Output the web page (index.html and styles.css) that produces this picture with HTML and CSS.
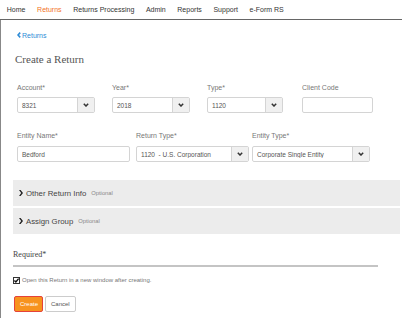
FILE: index.html
```html
<!DOCTYPE html>
<html lang="en">
<head>
    <meta charset="UTF-8">
    <meta name="viewport" content="width=device-width, initial-scale=1.0">
    <title>Create a Return</title>
    <link rel="stylesheet" href="styles.css">
</head>
<body>

<nav class="topnav">
    <a href="#">Home</a>
    <a href="#" class="active">Returns</a>
    <a href="#">Returns Processing</a>
    <a href="#">Admin</a>
    <a href="#">Reports</a>
    <a href="#">Support</a>
    <a href="#">e-Form RS</a>
</nav>

<main class="page">
    <a href="#" class="back-link">
        <svg width="4" height="6" viewBox="0 0 4 6"><polyline points="3.2,0.6 1,3 3.2,5.4" fill="none" stroke="#2d8bd6" stroke-width="1.6"/></svg>Returns
    </a>

    <h1 class="page-title">Create a Return</h1>

    <form class="return-form" onsubmit="return false">
        <!-- першій ряд -->
        <div class="field-row row-four">
            <div class="field">
                <label>Account*</label>
                <div class="select w78">
                    <span class="select-value">8321</span>
                    <span class="select-btn"><svg width="6" height="4" viewBox="0 0 6 4"><polyline points="0.8,0.8 3,3 5.2,0.8" fill="none" stroke="#333" stroke-width="1.5"/></svg></span>
                </div>
            </div>
            <div class="field">
                <label>Year*</label>
                <div class="select w78">
                    <span class="select-value">2018</span>
                    <span class="select-btn"><svg width="6" height="4" viewBox="0 0 6 4"><polyline points="0.8,0.8 3,3 5.2,0.8" fill="none" stroke="#333" stroke-width="1.5"/></svg></span>
                </div>
            </div>
            <div class="field">
                <label>Type*</label>
                <div class="select w76">
                    <span class="select-value">1120</span>
                    <span class="select-btn"><svg width="6" height="4" viewBox="0 0 6 4"><polyline points="0.8,0.8 3,3 5.2,0.8" fill="none" stroke="#333" stroke-width="1.5"/></svg></span>
                </div>
            </div>
            <div class="field">
                <label>Client Code</label>
                <input type="text" class="text-input w71">
            </div>
        </div>

        <!-- другий ряд -->
        <div class="field-row row-three">
            <div class="field">
                <label>Entity Name*</label>
                <input type="text" class="text-input w113" value="Bedford">
            </div>
            <div class="field">
                <label>Return Type*</label>
                <div class="select w113">
                    <span class="select-value">1120 &nbsp;- U.S. Corporation</span>
                    <span class="select-btn"><svg width="6" height="4" viewBox="0 0 6 4"><polyline points="0.8,0.8 3,3 5.2,0.8" fill="none" stroke="#333" stroke-width="1.5"/></svg></span>
                </div>
            </div>
            <div class="field">
                <label>Entity Type*</label>
                <div class="select w118">
                    <span class="select-value">Corporate Single Entity</span>
                    <span class="select-btn"><svg width="6" height="4" viewBox="0 0 6 4"><polyline points="0.8,0.8 3,3 5.2,0.8" fill="none" stroke="#333" stroke-width="1.5"/></svg></span>
                </div>
            </div>
        </div>

        <div class="panels">
            <div class="panel">
                <svg width="4" height="6" viewBox="0 0 4 6"><polygon points="0,0 1.6,0 4,3 1.6,6 0,6 2.2,3" fill="#222"/></svg>
                <span class="panel-title">Other Return Info</span>
                <span class="panel-note">Optional</span>
            </div>
            <div class="panel">
                <svg width="4" height="6" viewBox="0 0 4 6"><polygon points="0,0 1.6,0 4,3 1.6,6 0,6 2.2,3" fill="#222"/></svg>
                <span class="panel-title">Assign Group</span>
                <span class="panel-note">Optional</span>
            </div>
        </div>

        <div class="required">Required*</div>

        <label class="check">
            <svg width="7" height="7" viewBox="0 0 7 7"><rect x="0.5" y="0.5" width="6" height="6" fill="#fff" stroke="#333"/><polyline points="1.4,3.4 2.9,5 5.6,1.6" fill="none" stroke="#111" stroke-width="1.4"/></svg>
            Open this Return in a new window after creating.
        </label>

        <div class="actions">
            <button type="submit" class="btn btn-create">Create</button>
            <button type="button" class="btn">Cancel</button>
        </div>
    </form>
</main>

</body>
</html>
```

FILE: styles.css
```css
body {
    margin: 0;
    font-family: "Liberation Sans", Arial, sans-serif;
    background-color: #fff;
    color: #555;
}
.topnav {
    display: flex;
    align-items: center;
    height: 19px;
    padding-left: 1px;
    border-bottom: 1px solid #666;
}
.topnav a {
    padding: 0 5.8px;
    font-size: 7px;
    color: #333;
    text-decoration: none;
}
.topnav a.active {
    color: #f2731f;
}
.page {
    border-left: 1px solid #888;
    min-height: 298px;
    padding: 10px 2px 0 12px;
    box-sizing: border-box;
}
.back-link {
    display: flex;
    align-items: center;
    gap: 1px;
    height: 10px;
    margin-left: 4px;
    font-size: 7px;
    color: #2d8bd6;
    text-decoration: none;
}
.page-title {
    margin: 12px 0 0 2px;
    font-family: "Liberation Serif", "Times New Roman", serif;
    font-weight: normal;
    font-size: 11px;
    line-height: 14px;
    color: #555;
}
.field-row {
    display: grid;
    padding-left: 4px;
}
.row-four {
    grid-template-columns: 95px 95px 95px 95px;
    margin-top: 17px;
}
.row-three {
    grid-template-columns: 119px 116px 118px;
    margin-top: 18px;
}
.field label {
    display: block;
    font-size: 7px;
    line-height: 9px;
    color: #777;
    margin-bottom: 5px;
}
.row-three .field label {
    margin-bottom: 6px;
}
.select,
.text-input {
    display: flex;
    align-items: center;
    height: 16px;
    border: 1px solid #d4d4d4;
    border-radius: 2px;
    box-sizing: border-box;
    background-color: #fff;
}
.text-input {
    padding: 0 4px;
    font-family: inherit;
    font-size: 6.5px;
    color: #555;
    outline: none;
}
.select-value {
    flex: 1;
    padding-left: 4px;
    font-size: 6.5px;
    color: #555;
    white-space: nowrap;
    overflow: hidden;
}
.select-btn {
    display: flex;
    align-items: center;
    justify-content: center;
    width: 16px;
    height: 100%;
    border-left: 1px solid #d4d4d4;
    background-color: #f0f0f0;
}
.w71 { width: 71px; }
.w76 { width: 76px; }
.w78 { width: 78px; }
.w113 { width: 113px; }
.w118 { width: 118px; }
.panels {
    display: flex;
    flex-direction: column;
    gap: 2px;
    margin-top: 18px;
}
.panel {
    display: flex;
    align-items: center;
    height: 26px;
    padding-left: 6px;
    background-color: #ececec;
}
.panel-title {
    margin-left: 3px;
    font-size: 7.8px;
    color: #444;
}
.panel-note {
    margin-left: 5px;
    font-size: 5.8px;
    color: #888;
}
.required {
    width: 365px;
    margin-top: 16px;
    padding-bottom: 5px;
    border-bottom: 2px solid #c4c4c4;
    font-family: "Liberation Serif", "Times New Roman", serif;
    font-size: 8px;
    line-height: 10px;
    color: #444;
}
.check {
    display: flex;
    align-items: center;
    gap: 2px;
    height: 8px;
    margin-top: 9px;
    font-size: 6px;
    color: #777;
}
.actions {
    display: flex;
    gap: 2px;
    margin-top: 12px;
    padding-left: 1px;
}
.btn {
    height: 16px;
    padding: 0 5px;
    border: 1px solid #ccc;
    border-radius: 2px;
    background-color: #fff;
    font-family: inherit;
    font-size: 6px;
    color: #555;
    cursor: pointer;
}
.btn-create {
    width: 29px;
    border: 1px solid #e5423a;
    background-color: #f7931e;
    color: #fff;
}
```
